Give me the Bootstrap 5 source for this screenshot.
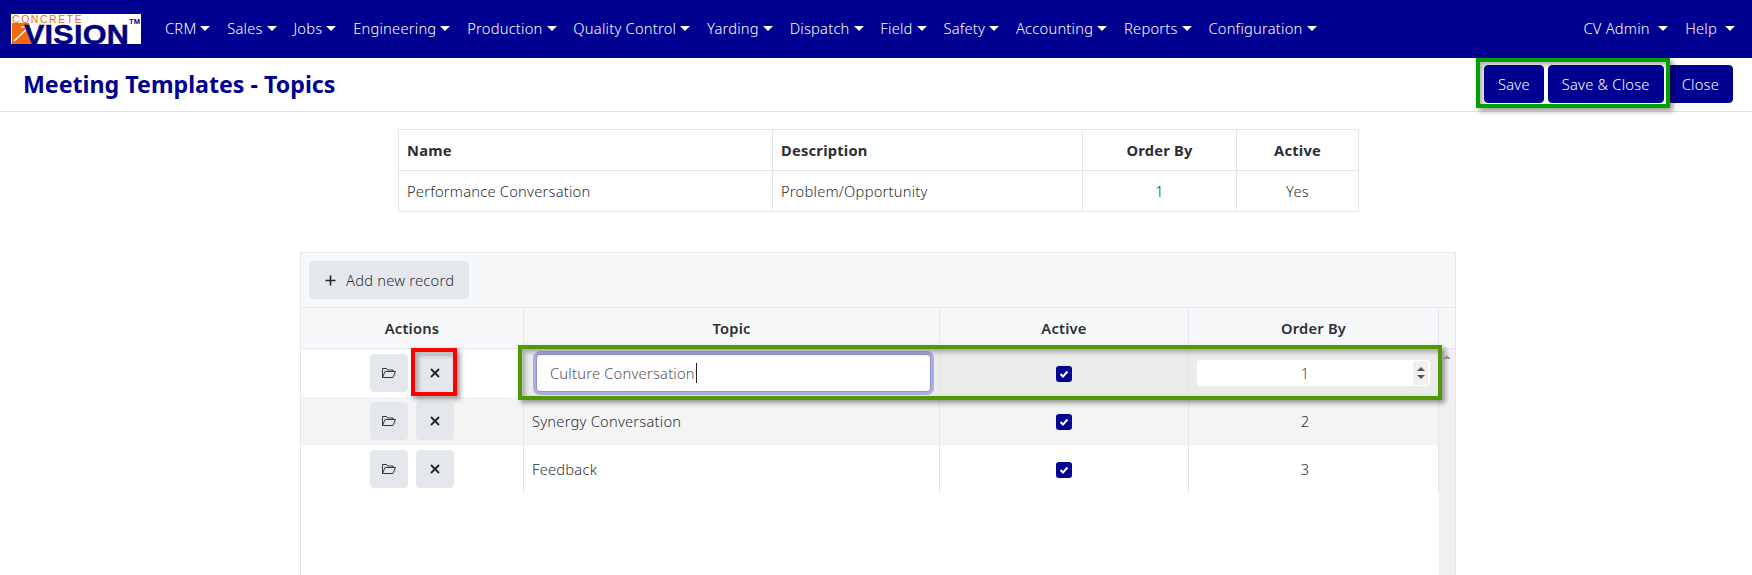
<!DOCTYPE html>
<html lang="en">
<head>
<meta charset="utf-8">
<title>Meeting Templates - Topics</title>
<link href="https://cdn.jsdelivr.net/npm/bootstrap@5.3.0/dist/css/bootstrap.min.css" rel="stylesheet">
<style>
:root { --cv-blue:#000090; --cv-line:#e4e6ef; }
html, body { height:575px; overflow:hidden; }
body { font-family:"Noto Sans","Open Sans",sans-serif; font-size:14.7px; font-weight:300; letter-spacing:.22px; color:#2b2f36; position:relative; background:#fff; }
.cv-nav { height:58px; background:var(--cv-blue); padding:0 8px 0 11px; flex-wrap:nowrap; }
.cv-logo { width:130px; height:30px; background:#fff; flex:none; margin-right:16px; display:block; }
.cv-nav .nav-link { color:#fff; font-size:14.7px; padding:7px 8.4px 9px 8px; white-space:nowrap; line-height:21px; }
.cv-nav .nav-item + .nav-item .nav-link { padding-left:8.4px; }
.cv-nav .dropdown-toggle::after { margin-left:4px; vertical-align:3px; border-top-width:5px; border-left-width:5px; border-right-width:5px; }
.cv-right .nav-link { padding:7px 9px 9px; }
.cv-right .dropdown-toggle::after { margin-left:8px; }
.cv-head { height:54px; border-bottom:1px solid #e0e0e0; padding:7px 19px 0 23px; }
.cv-title { font-size:23.2px; font-weight:700; letter-spacing:0; color:var(--cv-blue); margin:0; line-height:33px; padding-top:3px; }
.cv-btn { background:var(--cv-blue); border:1px solid var(--cv-blue); color:#fff; font-size:14.7px; font-weight:300; letter-spacing:.22px; height:38px; padding:0 13px; border-radius:4px; }
.cv-btn:hover { background:var(--cv-blue); color:#fff; }
.cv-info { width:960px; margin:17px 0 0 398px; border-collapse:collapse; table-layout:fixed; }
.cv-info th, .cv-info td { border:1px solid var(--cv-line); padding:0 8px; height:41px; vertical-align:middle; }
.cv-info th { font-weight:700; }
.cv-grid { width:1156px; height:323px; margin:40px 0 0 300px; border:1px solid var(--cv-line); border-bottom:0; background:#fff; }
.cv-toolbar { height:55px; background:#f7f8fa; border-bottom:1px solid var(--cv-line); padding:8px; }
.cv-add { background:#e4e7eb; border:0; border-radius:4px; height:38px; width:160px; padding:0 0 0 16px; color:#2b2f36; font-size:14.7px; font-weight:300; letter-spacing:.22px; white-space:nowrap; }
.cv-add svg { margin-right:10px; flex:none; }
.cv-table { width:1138px; flex:none; table-layout:fixed; border-collapse:separate; border-spacing:0; align-self:flex-start; }
.cv-table th { background:#f7f8fa; height:41px; padding:0; font-weight:600; text-align:center; border-right:1px solid var(--cv-line); border-bottom:1px solid var(--cv-line); }
.cv-table td { height:48px; padding:0 8px; border-right:1px solid var(--cv-line); vertical-align:middle; }
.cv-table td.cv-pad-topic { padding-left:12px; }
.cv-table td.cv-pad-num { padding-left:8px; padding-right:25px; text-align:center; }
.cv-table tr.cv-sel td:not(:first-child) { background:#ebebeb; }
.cv-table tr.cv-alt td { background:#f4f4f4; }
.cv-side { width:16px; flex:none; }
.cv-hfill { background:#f7f8fa; border-bottom:1px solid var(--cv-line); height:41px; }
.cv-scroll { background:#f0f0f0; position:relative; height:226px; }
.cv-scroll::before { content:""; position:absolute; left:4px; top:6px; border:4px solid transparent; border-top:0; border-bottom:4px solid #a5a5a5; }
.cv-act { width:38px; height:38px; background:#e4e7eb; border:0; border-radius:4px; padding:0; display:inline-flex; align-items:center; justify-content:center; }
.cv-check { width:16px; height:16px; margin-top:-2px; background:var(--cv-blue); border-radius:3px; display:inline-flex; align-items:center; justify-content:center; vertical-align:middle; }
.cv-topic-input { height:38px; width:100%; border:1px solid #8f8fd3; border-radius:4px; box-shadow:0 0 0 3px #aeaede; background:#fff; padding:0 13px; color:#555; display:flex; align-items:center; }
.cv-caret { display:inline-block; width:1px; height:20px; background:#222; margin-left:1px; }
.cv-num { height:26px; background:#fff; border-radius:4px; display:flex; align-items:center; text-align:center; color:#444; }
.cv-num span { flex:1; }
.cv-spin { width:15px; height:24px; background:#f0f0f0; margin-right:2px; display:flex; flex-direction:column; align-items:center; justify-content:center; gap:4px; }
.cv-spin i { display:block; border:4px solid transparent; }
.cv-spin i:first-child { border-top:0; border-bottom:4px solid #555; }
.cv-spin i:last-child { border-bottom:0; border-top:4px solid #555; }
.cv-mark { position:absolute; box-shadow:3px 3px 5px rgba(0,0,0,.4), inset 3px 3px 5px rgba(0,0,0,.3); pointer-events:none; }
.cv-mark-a { left:1476px; top:58px; width:194px; height:50px; border:4px solid #00a000; }
.cv-mark-b { left:411px; top:348px; width:46px; height:48px; border:4px solid #f00; }
.cv-mark-c { left:518px; top:345px; width:924px; height:55px; border:4px solid #4f9a00; }
</style>
</head>
<body>
<nav class="navbar cv-nav d-flex align-items-center justify-content-between">
  <div class="d-flex align-items-center">
    <svg class="cv-logo" viewBox="0 0 130 30" role="img" aria-label="Concrete Vision logo">
      <rect width="130" height="30" fill="#fff"/>
      <path d="M1 9H18L23 30H1Z" fill="#f26a0c"/>
      <path d="M3 27 L17 14 M10 13 H18 V21" stroke="#fff" stroke-width="1.6" fill="none"/>
      <text x="1" y="8.5" font-family="Liberation Sans" font-size="10.5" fill="#f26a0c" textLength="70">CONCRETE</text>
      <text x="13" y="29.5" font-family="Liberation Sans" font-weight="700" font-size="28.5" stroke="#000080" stroke-width=".5" fill="#000080" textLength="105" lengthAdjust="spacingAndGlyphs">VISION</text>
      <text x="118" y="9.5" font-family="Liberation Sans" font-weight="700" font-size="7.5" fill="#000080">TM</text>
    </svg>
    <ul class="nav flex-nowrap">
      <li class="nav-item"><a class="nav-link dropdown-toggle" href="#">CRM</a></li>
      <li class="nav-item"><a class="nav-link dropdown-toggle" href="#">Sales</a></li>
      <li class="nav-item"><a class="nav-link dropdown-toggle" href="#">Jobs</a></li>
      <li class="nav-item"><a class="nav-link dropdown-toggle" href="#">Engineering</a></li>
      <li class="nav-item"><a class="nav-link dropdown-toggle" href="#">Production</a></li>
      <li class="nav-item"><a class="nav-link dropdown-toggle" href="#">Quality Control</a></li>
      <li class="nav-item"><a class="nav-link dropdown-toggle" href="#">Yarding</a></li>
      <li class="nav-item"><a class="nav-link dropdown-toggle" href="#">Dispatch</a></li>
      <li class="nav-item"><a class="nav-link dropdown-toggle" href="#">Field</a></li>
      <li class="nav-item"><a class="nav-link dropdown-toggle" href="#">Safety</a></li>
      <li class="nav-item"><a class="nav-link dropdown-toggle" href="#">Accounting</a></li>
      <li class="nav-item"><a class="nav-link dropdown-toggle" href="#">Reports</a></li>
      <li class="nav-item"><a class="nav-link dropdown-toggle" href="#">Configuration</a></li>
    </ul>
  </div>
  <ul class="nav flex-nowrap cv-right">
    <li class="nav-item"><a class="nav-link dropdown-toggle" href="#">CV Admin</a></li>
    <li class="nav-item"><a class="nav-link dropdown-toggle" href="#">Help</a></li>
  </ul>
</nav>
<div class="cv-head d-flex justify-content-between align-items-start">
  <h1 class="cv-title">Meeting Templates - Topics</h1>
  <div class="d-flex gap-1">
    <button class="btn cv-btn">Save</button>
    <button class="btn cv-btn">Save &amp; Close</button>
    <button class="btn cv-btn">Close</button>
  </div>
</div>
<table class="cv-info">
  <colgroup><col style="width:374px"><col style="width:310px"><col style="width:154px"><col style="width:122px"></colgroup>
  <tr><th>Name</th><th>Description</th><th class="text-center">Order By</th><th class="text-center">Active</th></tr>
  <tr><td>Performance Conversation</td><td>Problem/Opportunity</td><td class="text-center">1</td><td class="text-center">Yes</td></tr>
</table>
<div class="cv-grid">
  <div class="cv-toolbar"><button class="cv-add d-inline-flex align-items-center"><svg width="11" height="11" viewBox="0 0 11 11"><path d="M5.5 .5V10.5M.5 5.5H10.5" stroke="#212529" stroke-width="1.6"/></svg>Add new record</button></div>
  <div class="d-flex">
    <table class="cv-table">
      <colgroup><col style="width:223px"><col style="width:416px"><col style="width:249px"><col style="width:250px"></colgroup>
      <tr><th>Actions</th><th>Topic</th><th>Active</th><th>Order By</th></tr>
      <tr class="cv-sel">
        <td><div class="d-flex justify-content-center gap-2"><button class="cv-act" aria-label="Open"><svg width="14" height="12" viewBox="0 0 14 12"><path d="M.5 10.5V1.5H4.5L5.5 3H11V4.5M.5 10.5L3 4.5H13.5L11 10.5Z" fill="none" stroke="#212529" stroke-width=".9"/></svg></button><button class="cv-act" aria-label="Delete"><svg width="10" height="10" viewBox="0 0 10 10"><path d="M1 1L9 9M9 1L1 9" stroke="#212529" stroke-width="1.8"/></svg></button></div></td>
        <td class="cv-pad-topic"><div class="cv-topic-input"><span>Culture Conversation</span><span class="cv-caret"></span></div></td>
        <td class="text-center"><span class="cv-check"><svg width="10" height="8" viewBox="0 0 10 8"><path d="M1.5 4L4 6.5L8.5 1.5" fill="none" stroke="#fff" stroke-width="2"/></svg></span></td>
        <td><div class="cv-num"><span>1</span><div class="cv-spin"><i></i><i></i></div></div></td>
      </tr>
      <tr class="cv-alt">
        <td><div class="d-flex justify-content-center gap-2"><button class="cv-act" aria-label="Open"><svg width="14" height="12" viewBox="0 0 14 12"><path d="M.5 10.5V1.5H4.5L5.5 3H11V4.5M.5 10.5L3 4.5H13.5L11 10.5Z" fill="none" stroke="#212529" stroke-width=".9"/></svg></button><button class="cv-act" aria-label="Delete"><svg width="10" height="10" viewBox="0 0 10 10"><path d="M1 1L9 9M9 1L1 9" stroke="#212529" stroke-width="1.8"/></svg></button></div></td>
        <td>Synergy Conversation</td>
        <td class="text-center"><span class="cv-check"><svg width="10" height="8" viewBox="0 0 10 8"><path d="M1.5 4L4 6.5L8.5 1.5" fill="none" stroke="#fff" stroke-width="2"/></svg></span></td>
        <td class="cv-pad-num">2</td>
      </tr>
      <tr>
        <td><div class="d-flex justify-content-center gap-2"><button class="cv-act" aria-label="Open"><svg width="14" height="12" viewBox="0 0 14 12"><path d="M.5 10.5V1.5H4.5L5.5 3H11V4.5M.5 10.5L3 4.5H13.5L11 10.5Z" fill="none" stroke="#212529" stroke-width=".9"/></svg></button><button class="cv-act" aria-label="Delete"><svg width="10" height="10" viewBox="0 0 10 10"><path d="M1 1L9 9M9 1L1 9" stroke="#212529" stroke-width="1.8"/></svg></button></div></td>
        <td>Feedback</td>
        <td class="text-center"><span class="cv-check"><svg width="10" height="8" viewBox="0 0 10 8"><path d="M1.5 4L4 6.5L8.5 1.5" fill="none" stroke="#fff" stroke-width="2"/></svg></span></td>
        <td class="cv-pad-num">3</td>
      </tr>
    </table>
    <div class="cv-side"><div class="cv-hfill"></div><div class="cv-scroll"></div></div>
  </div>
</div>
<div class="cv-mark cv-mark-a"></div>
<div class="cv-mark cv-mark-b"></div>
<div class="cv-mark cv-mark-c"></div>
<script src="https://cdn.jsdelivr.net/npm/bootstrap@5.3.0/dist/js/bootstrap.bundle.min.js"></script>
</body>
</html>
